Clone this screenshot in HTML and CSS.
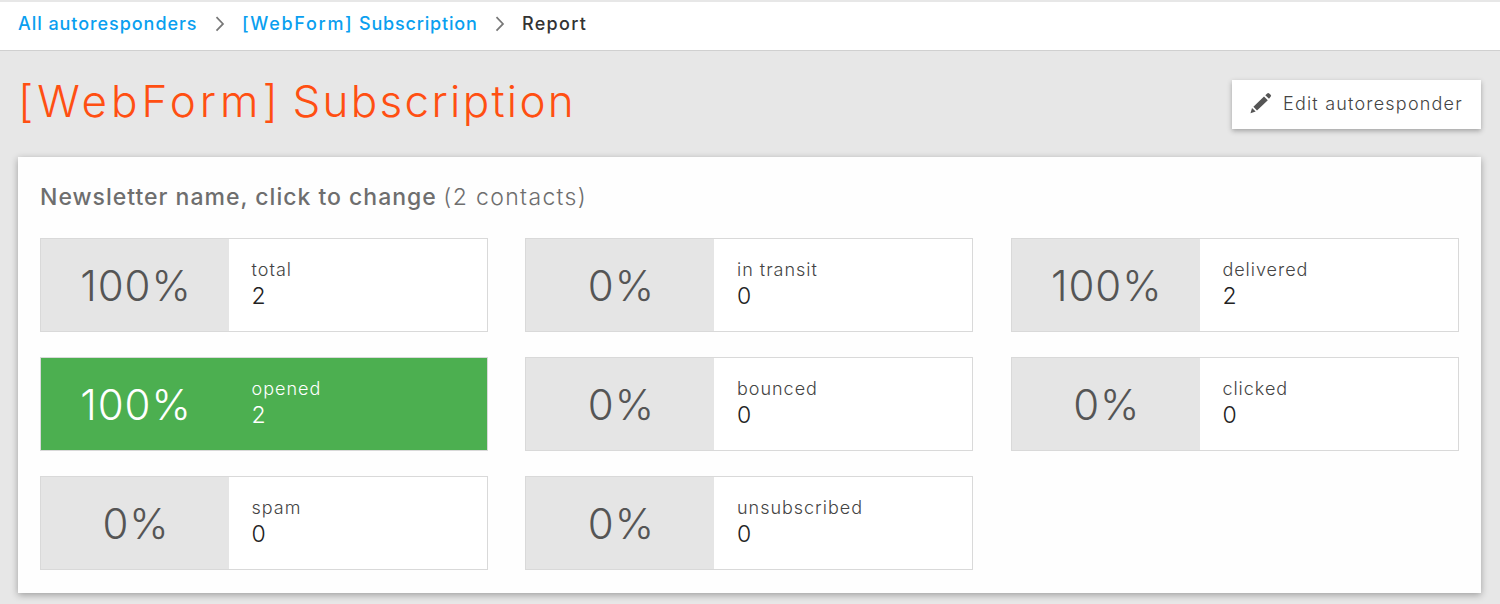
FILE: index.html
```html
<!DOCTYPE html>
<html lang="en">
<head>
<meta charset="utf-8">
<title>Report</title>
<link rel="stylesheet" href="styles.css">
</head>
<body>
<nav class="crumbs">
  <a class="crumb crumb-root">All autoresponders</a>
  <svg class="chevron" width="10" height="16" viewBox="0 0 10 16"><path d="M1.5 1.2 8 7.9 1.5 14.6"/></svg>
  <a class="crumb crumb-parent"><span class="tag">[WebForm]</span> Subscription</a>
  <svg class="chevron" width="10" height="16" viewBox="0 0 10 16"><path d="M1.5 1.2 8 7.9 1.5 14.6"/></svg>
  <span class="crumb crumb-current">Report</span>
</nav>
<header class="page-head">
  <h1 class="title"><span class="tag">[WebForm]</span> Subscription</h1>
  <button class="edit">
    <svg class="pencil" width="22" height="22" viewBox="0 0 22 22"><path d="M.5 21.2 2 16l3.7 3.6ZM3.4 14.8 14 4.6l3.8 3.6L7 18.5ZM15.3 3.3 17.2 1.5q1-.9 2 0l1.4 1.3q1 1 0 2L19 6.8Z"/></svg>
    <span class="edit-label">Edit autoresponder</span>
  </button>
</header>
<main class="card">
  <h2 class="card-title"><span class="name">Newsletter name, click to change</span> <span class="contacts">(2 contacts)</span></h2>
  <div class="stats">
    <div class="stat"><div class="pct">100%</div><div class="info"><span class="label">total</span><span class="count">2</span></div></div>
    <div class="stat"><div class="pct">0%</div><div class="info"><span class="label">in transit</span><span class="count">0</span></div></div>
    <div class="stat"><div class="pct">100%</div><div class="info"><span class="label">delivered</span><span class="count">2</span></div></div>
    <div class="stat active"><div class="pct">100%</div><div class="info"><span class="label">opened</span><span class="count">2</span></div></div>
    <div class="stat"><div class="pct">0%</div><div class="info"><span class="label">bounced</span><span class="count">0</span></div></div>
    <div class="stat"><div class="pct">0%</div><div class="info"><span class="label">clicked</span><span class="count">0</span></div></div>
    <div class="stat"><div class="pct">0%</div><div class="info"><span class="label">spam</span><span class="count">0</span></div></div>
    <div class="stat"><div class="pct">0%</div><div class="info"><span class="label">unsubscribed</span><span class="count">0</span></div></div>
  </div>
</main>
</body>
</html>
```
FILE: styles.css
```css
* { box-sizing: border-box; }
body {
  margin: 0;
  height: 604px;
  overflow: hidden;
  background: #e7e7e7;
  font-family: Inter, "Liberation Sans", sans-serif;
  white-space: nowrap;
}
.crumbs {
  display: flex;
  align-items: center;
  height: 51px;
  padding: 0 18px 5px;
  background: #fff;
  border-top: 2px solid #e7e7e7;
  border-bottom: 1px solid #d0d0d0;
}
.crumb { font-size: 18px; font-weight: 500; line-height: 24px; letter-spacing: 0.94px; color: #0a9ff0; }
.crumb-root { width: 179px; }
.crumb-parent { width: 235px; letter-spacing: 0.8px; }
.crumb-parent .tag { letter-spacing: 1.7px; }
.crumb-current { color: #333; letter-spacing: 1.3px; }
.chevron { margin: 0 17px 0 18px; fill: none; stroke: #777; stroke-width: 1.7; }
.page-head {
  display: flex;
  justify-content: space-between;
  align-items: flex-start;
  height: 106px;
  padding: 29px 19px 0 18px;
}
.title { margin: -2px 0 0; font-size: 44px; line-height: 46px; font-weight: 300; letter-spacing: 2.3px; word-spacing: -4px; color: #ff4f12; }
.title .tag { letter-spacing: 4px; }
.edit {
  display: flex;
  align-items: center;
  width: 249px;
  height: 49px;
  padding: 0 0 3px 18px;
  border: 0;
  background: #fff;
  box-shadow: 0 2px 5px rgba(0,0,0,.3);
  font-family: inherit;
}
.pencil { fill: #555; }
.edit-label { margin-left: 11px; font-size: 18px; font-weight: 300; letter-spacing: 1.2px; color: #444; }
.card {
  height: 436px;
  margin: 0 19px 0 17.5px;
  padding: 26px 22px 0 22.5px;
  background: #fefefe;
  box-shadow: 0 2px 7px rgba(0,0,0,.32);
}
.card-title { margin: 0 0 27px; font-size: 23px; line-height: 28px; font-weight: 300; color: #6e6e6e; }
.name { font-weight: 500; letter-spacing: 1px; }
.contacts { letter-spacing: 1.35px; }
.stats {
  display: grid;
  grid-template-columns: repeat(3, 448px);
  grid-auto-rows: 94px;
  gap: 25px 37.4px;
}
.stat { display: flex; border: 1px solid #d9d9d9; background: #fff; }
.pct {
  width: 188px;
  padding-left: 2px;
  background: #e5e5e5;
  color: #555;
  text-align: center;
  font-size: 42px;
  font-weight: 300;
  line-height: 93px;
  letter-spacing: 0.9px;
}
.info { display: flex; flex-direction: column; padding: 17px 0 0 22.6px; font-weight: 300; }
.label { font-size: 18px; line-height: 28px; letter-spacing: 0.98px; color: #444; }
.count { font-size: 23px; line-height: 24px; color: #222; }
.active, .active .pct { background: #4caf50; }
.active .pct, .active .label, .active .count { color: #fff; }
```
